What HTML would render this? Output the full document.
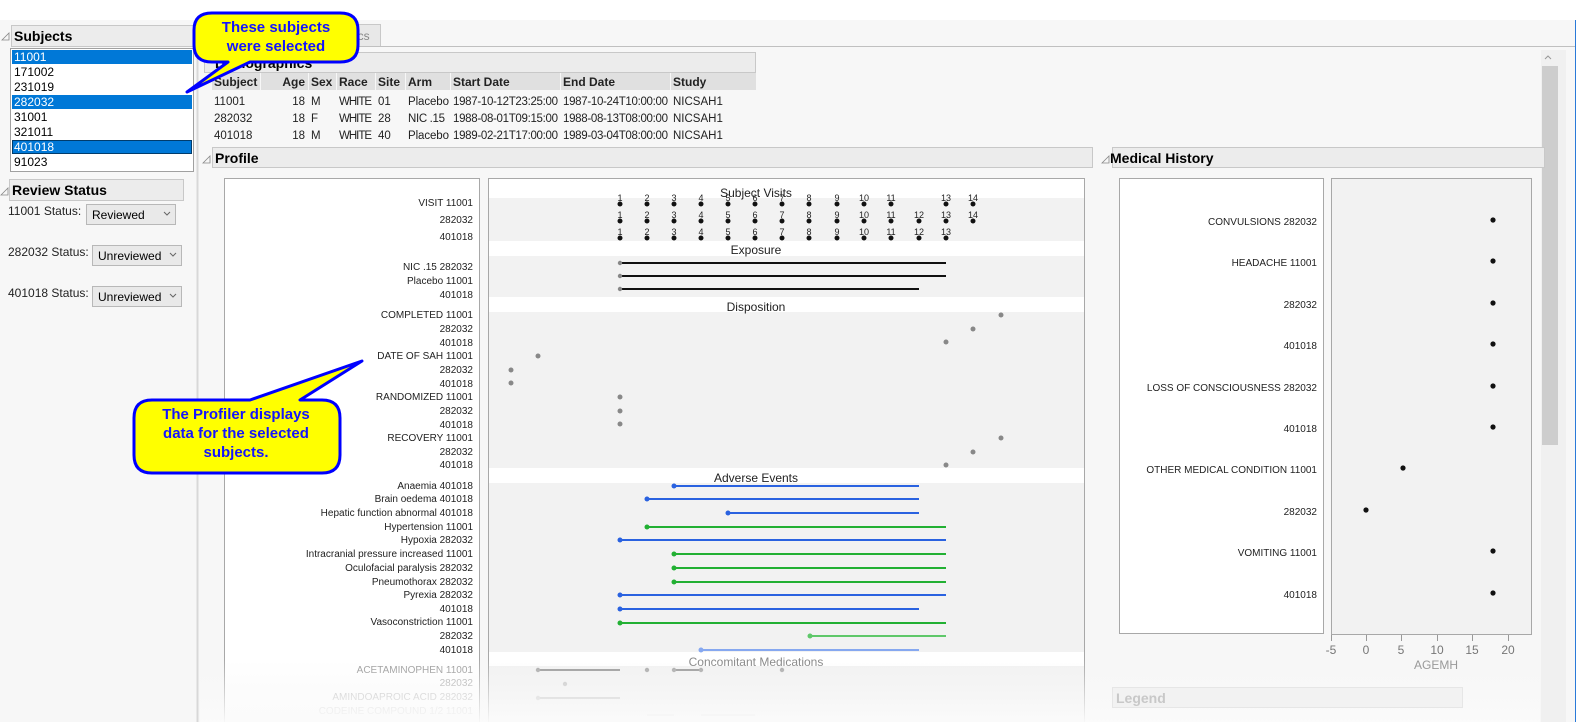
<!DOCTYPE html>
<html><head><meta charset="utf-8"><style>
html,body{margin:0;padding:0;background:#fff;overflow:hidden;width:1576px;height:722px}
svg{display:block;font-family:"Liberation Sans",sans-serif}
</style></head><body>
<svg width="1576" height="722" viewBox="0 0 1576 722" xmlns="http://www.w3.org/2000/svg">
<defs>
<linearGradient id="fade" x1="0" y1="0" x2="0" y2="1">
<stop offset="0" stop-color="#f7f7f7" stop-opacity="0"/><stop offset="1" stop-color="#fbfbfb" stop-opacity="0.95"/>
</linearGradient>
</defs>
<rect x="0" y="20" width="1576" height="702" fill="#f7f7f7"/>
<!-- left panel -->
<line x1="197.5" y1="20" x2="197.5" y2="722" stroke="#d8d8d8" stroke-width="2"/>
<path d="M2 40 L9 33 L9 40 Z" fill="none" stroke="#888" stroke-width="0.8"/>
<rect x="11.5" y="25.5" width="182" height="21" fill="#ececec" stroke="#c8c8c8"/>
<text x="14" y="41" font-size="14" font-weight="bold">Subjects</text>
<rect x="10.5" y="48.5" width="183" height="123" fill="#fff" stroke="#a0a0a0"/>
<rect x="12" y="50" width="180" height="14" fill="#0078d7"/>
<rect x="12" y="95" width="180" height="14" fill="#0078d7"/>
<rect x="12" y="140" width="180" height="14" fill="#0078d7"/>
<rect x="12.5" y="140.5" width="179" height="13" fill="none" stroke="#000" stroke-dasharray="1,1"/>
<g font-size="12">
<text x="14" y="61" fill="#fff">11001</text>
<text x="14" y="76">171002</text>
<text x="14" y="91">231019</text>
<text x="14" y="106" fill="#fff">282032</text>
<text x="14" y="121">31001</text>
<text x="14" y="136">321011</text>
<text x="14" y="151" fill="#fff">401018</text>
<text x="14" y="166">91023</text>
</g>
<path d="M1 195 L8 188 L8 195 Z" fill="none" stroke="#888" stroke-width="0.8"/>
<rect x="9.5" y="179.5" width="174" height="21" fill="#ececec" stroke="#c8c8c8"/>
<text x="12" y="195" font-size="14" font-weight="bold">Review Status</text>
<g font-size="12" fill="#222">
<text x="8" y="215">11001 Status:</text>
<text x="8" y="256">282032 Status:</text>
<text x="8" y="297">401018 Status:</text>
</g>
<rect x="86.5" y="204.5" width="89" height="20" fill="#e9e9e9" stroke="#b8b8b8"/>
<text x="92" y="219" font-size="12">Reviewed</text>
<path d="M164 212 l3 3 l3 -3" fill="none" stroke="#666"/>
<rect x="92.5" y="245.5" width="89" height="20" fill="#e9e9e9" stroke="#b8b8b8"/>
<text x="98" y="260" font-size="12">Unreviewed</text>
<path d="M170 253 l3 3 l3 -3" fill="none" stroke="#666"/>
<rect x="92.5" y="286.5" width="89" height="20" fill="#e9e9e9" stroke="#b8b8b8"/>
<text x="98" y="301" font-size="12">Unreviewed</text>
<path d="M170 294 l3 3 l3 -3" fill="none" stroke="#666"/>

<!-- tab -->
<rect x="330.5" y="24.5" width="50" height="22" fill="#e8e8e8" stroke="#c8c8c8"/>
<text x="355" y="40" font-size="12" fill="#888">ics</text>
<line x1="200" y1="46.5" x2="1576" y2="46.5" stroke="#c0c0c0"/>
<line x1="1575.5" y1="20" x2="1575.5" y2="722" stroke="#2a7ad8"/>
<!-- scrollbar -->
<rect x="1541" y="50" width="25" height="672" fill="#f0f0f0"/>
<rect x="1542" y="66" width="16" height="379" fill="#cdcdcd"/>
<path d="M1545 59 l3 -3 l3 3" fill="none" stroke="#999"/>

<!-- demographics -->
<rect x="204.5" y="52.5" width="551" height="20" fill="#ececec" stroke="#c8c8c8"/>
<text x="215" y="68" font-size="14" font-weight="bold">Demographics</text>
<g fill="#e0e0e0">
<rect x="212" y="73" width="48" height="17"/><rect x="261" y="73" width="47" height="17"/><rect x="309" y="73" width="27" height="17"/><rect x="337" y="73" width="38" height="17"/><rect x="376" y="73" width="29" height="17"/><rect x="406" y="73" width="44" height="17"/><rect x="451" y="73" width="109" height="17"/><rect x="561" y="73" width="109" height="17"/><rect x="671" y="73" width="85" height="17"/>
</g>
<g font-size="12" font-weight="bold" fill="#222">
<text x="214" y="86">Subject</text><text x="305" y="86" text-anchor="end">Age</text><text x="311" y="86">Sex</text><text x="339" y="86">Race</text><text x="378" y="86">Site</text><text x="408" y="86">Arm</text><text x="453" y="86">Start Date</text><text x="563" y="86">End Date</text><text x="673" y="86">Study</text>
</g>
<g font-size="11.5" fill="#222">
<text x="214" y="105">11001</text><text x="305" y="105" text-anchor="end">18</text><text x="311" y="105">M</text><text x="339" y="105" textLength="33">WHITE</text><text x="378" y="105">01</text><text x="408" y="105" textLength="41">Placebo</text><text x="453" y="105" textLength="105">1987-10-12T23:25:00</text><text x="563" y="105" textLength="105">1987-10-24T10:00:00</text><text x="673" y="105">NICSAH1</text>
<text x="214" y="122">282032</text><text x="305" y="122" text-anchor="end">18</text><text x="311" y="122">F</text><text x="339" y="122" textLength="33">WHITE</text><text x="378" y="122">28</text><text x="408" y="122" textLength="37">NIC .15</text><text x="453" y="122" textLength="105">1988-08-01T09:15:00</text><text x="563" y="122" textLength="105">1988-08-13T08:00:00</text><text x="673" y="122">NICSAH1</text>
<text x="214" y="139">401018</text><text x="305" y="139" text-anchor="end">18</text><text x="311" y="139">M</text><text x="339" y="139" textLength="33">WHITE</text><text x="378" y="139">40</text><text x="408" y="139" textLength="41">Placebo</text><text x="453" y="139" textLength="105">1989-02-21T17:00:00</text><text x="563" y="139" textLength="105">1989-03-04T08:00:00</text><text x="673" y="139">NICSAH1</text>
</g>

<!-- profile -->
<path d="M203 163 L210 156 L210 163 Z" fill="none" stroke="#888" stroke-width="0.8"/>
<rect x="212.5" y="147.5" width="880" height="20" fill="#ececec" stroke="#c8c8c8"/>
<text x="215" y="163" font-size="14" font-weight="bold">Profile</text>
<rect x="224.5" y="178.5" width="255" height="560" fill="#fff" stroke="#a8a8a8"/>
<rect x="488.5" y="178.5" width="596" height="560" fill="#fff" stroke="#a8a8a8"/>
<g fill="#f2f2f2">
<rect x="489" y="198" width="595" height="43"/>
<rect x="489" y="256" width="595" height="41"/>
<rect x="489" y="312" width="595" height="156"/>
<rect x="489" y="483" width="595" height="169"/>
<rect x="489" y="666" width="595" height="56"/>
</g>
<g font-size="12" text-anchor="middle" fill="#222">
<text x="756" y="197">Subject Visits</text>
<text x="756" y="254">Exposure</text>
<text x="756" y="311">Disposition</text>
<text x="756" y="482">Adverse Events</text>
<text x="756" y="666" fill="#888">Concomitant Medications</text>
</g>
<g font-size="10" text-anchor="end" fill="#222">
<text x="473" y="206">VISIT 11001</text><text x="473" y="223">282032</text><text x="473" y="240">401018</text>
<text x="473" y="270">NIC .15 282032</text><text x="473" y="284">Placebo 11001</text><text x="473" y="298">401018</text>
<text x="473" y="318">COMPLETED 11001</text><text x="473" y="332">282032</text><text x="473" y="346">401018</text><text x="473" y="359">DATE OF SAH 11001</text><text x="473" y="373">282032</text><text x="473" y="387">401018</text><text x="473" y="400">RANDOMIZED 11001</text><text x="473" y="414">282032</text><text x="473" y="428">401018</text><text x="473" y="441">RECOVERY 11001</text><text x="473" y="455">282032</text><text x="473" y="468">401018</text>
<text x="473" y="489">Anaemia 401018</text><text x="473" y="502">Brain oedema 401018</text><text x="473" y="516">Hepatic function abnormal 401018</text><text x="473" y="530">Hypertension 11001</text><text x="473" y="543">Hypoxia 282032</text><text x="473" y="557">Intracranial pressure increased 11001</text><text x="473" y="571">Oculofacial paralysis 282032</text><text x="473" y="585">Pneumothorax 282032</text><text x="473" y="598">Pyrexia 282032</text><text x="473" y="612">401018</text><text x="473" y="625">Vasoconstriction 11001</text><text x="473" y="639">282032</text><text x="473" y="653">401018</text>
<text x="473" y="673" fill="#999">ACETAMINOPHEN 11001</text><text x="473" y="686" fill="#aaa">282032</text><text x="473" y="700" fill="#bbb">AMINDOAPROIC ACID 282032</text><text x="473" y="714" fill="#ccc">CODEINE COMPOUND 1/2 11001</text>
</g>
<!-- visits -->
<g font-size="9" text-anchor="middle" fill="#222">
<text x="620" y="201">1</text><text x="647" y="201">2</text><text x="674" y="201">3</text><text x="701" y="201">4</text><text x="728" y="201">5</text><text x="755" y="201">6</text><text x="782" y="201">7</text><text x="809" y="201">8</text><text x="837" y="201">9</text><text x="864" y="201">10</text><text x="891" y="201">11</text><text x="946" y="201">13</text><text x="973" y="201">14</text>
<text x="620" y="218">1</text><text x="647" y="218">2</text><text x="674" y="218">3</text><text x="701" y="218">4</text><text x="728" y="218">5</text><text x="755" y="218">6</text><text x="782" y="218">7</text><text x="809" y="218">8</text><text x="837" y="218">9</text><text x="864" y="218">10</text><text x="891" y="218">11</text><text x="919" y="218">12</text><text x="946" y="218">13</text><text x="973" y="218">14</text>
<text x="620" y="235">1</text><text x="647" y="235">2</text><text x="674" y="235">3</text><text x="701" y="235">4</text><text x="728" y="235">5</text><text x="755" y="235">6</text><text x="782" y="235">7</text><text x="809" y="235">8</text><text x="837" y="235">9</text><text x="864" y="235">10</text><text x="891" y="235">11</text><text x="919" y="235">12</text><text x="946" y="235">13</text>
</g>
<g fill="#111">
<circle cx="620" cy="204" r="2.5"/><circle cx="647" cy="204" r="2.5"/><circle cx="674" cy="204" r="2.5"/><circle cx="701" cy="204" r="2.5"/><circle cx="728" cy="204" r="2.5"/><circle cx="755" cy="204" r="2.5"/><circle cx="782" cy="204" r="2.5"/><circle cx="809" cy="204" r="2.5"/><circle cx="837" cy="204" r="2.5"/><circle cx="864" cy="204" r="2.5"/><circle cx="891" cy="204" r="2.5"/><circle cx="946" cy="204" r="2.5"/><circle cx="973" cy="204" r="2.5"/>
<circle cx="620" cy="221" r="2.5"/><circle cx="647" cy="221" r="2.5"/><circle cx="674" cy="221" r="2.5"/><circle cx="701" cy="221" r="2.5"/><circle cx="728" cy="221" r="2.5"/><circle cx="755" cy="221" r="2.5"/><circle cx="782" cy="221" r="2.5"/><circle cx="809" cy="221" r="2.5"/><circle cx="837" cy="221" r="2.5"/><circle cx="864" cy="221" r="2.5"/><circle cx="891" cy="221" r="2.5"/><circle cx="919" cy="221" r="2.5"/><circle cx="946" cy="221" r="2.5"/><circle cx="973" cy="221" r="2.5"/>
<circle cx="620" cy="238" r="2.5"/><circle cx="647" cy="238" r="2.5"/><circle cx="674" cy="238" r="2.5"/><circle cx="701" cy="238" r="2.5"/><circle cx="728" cy="238" r="2.5"/><circle cx="755" cy="238" r="2.5"/><circle cx="782" cy="238" r="2.5"/><circle cx="809" cy="238" r="2.5"/><circle cx="837" cy="238" r="2.5"/><circle cx="864" cy="238" r="2.5"/><circle cx="891" cy="238" r="2.5"/><circle cx="919" cy="238" r="2.5"/><circle cx="946" cy="238" r="2.5"/>
</g>
<!-- exposure -->
<g stroke="#111" stroke-width="2">
<line x1="620" y1="263" x2="946" y2="263"/><line x1="620" y1="276" x2="946" y2="276"/><line x1="620" y1="289" x2="919" y2="289"/>
</g>
<g fill="#888"><circle cx="620" cy="263" r="2.2"/><circle cx="620" cy="276" r="2.2"/><circle cx="620" cy="289" r="2.2"/>
<circle cx="1001" cy="315" r="2.5"/><circle cx="973" cy="329" r="2.5"/><circle cx="946" cy="342" r="2.5"/><circle cx="538" cy="356" r="2.5"/><circle cx="511" cy="370" r="2.5"/><circle cx="511" cy="383" r="2.5"/><circle cx="620" cy="397" r="2.5"/><circle cx="620" cy="411" r="2.5"/><circle cx="620" cy="424" r="2.5"/><circle cx="1001" cy="438" r="2.5"/><circle cx="973" cy="452" r="2.5"/><circle cx="946" cy="465" r="2.5"/>
</g>
<!-- AE -->
<g stroke-width="2">
<g stroke="#2a62e0"><line x1="674" y1="486" x2="919" y2="486"/><line x1="647" y1="499" x2="919" y2="499"/><line x1="728" y1="513" x2="919" y2="513"/><line x1="620" y1="540" x2="946" y2="540"/><line x1="620" y1="595" x2="946" y2="595"/><line x1="620" y1="609" x2="919" y2="609"/></g>
<g stroke="#22b033"><line x1="647" y1="527" x2="946" y2="527"/><line x1="674" y1="554" x2="946" y2="554"/><line x1="674" y1="568" x2="946" y2="568"/><line x1="674" y1="582" x2="946" y2="582"/><line x1="620" y1="623" x2="946" y2="623"/></g>
<line x1="810" y1="636" x2="946" y2="636" stroke="#5fc86a"/><line x1="701" y1="650" x2="919" y2="650" stroke="#86a8f0"/>
</g>
<g fill="#2a62e0"><circle cx="674" cy="486" r="2.5"/><circle cx="647" cy="499" r="2.5"/><circle cx="728" cy="513" r="2.5"/><circle cx="620" cy="540" r="2.5"/><circle cx="620" cy="595" r="2.5"/><circle cx="620" cy="609" r="2.5"/></g>
<g fill="#22b033"><circle cx="647" cy="527" r="2.5"/><circle cx="674" cy="554" r="2.5"/><circle cx="674" cy="568" r="2.5"/><circle cx="674" cy="582" r="2.5"/><circle cx="620" cy="623" r="2.5"/></g>
<circle cx="810" cy="636" r="2.5" fill="#5fc86a"/><circle cx="701" cy="650" r="2.5" fill="#86a8f0"/>
<!-- CM -->
<g stroke-width="2"><line x1="538" y1="670" x2="620" y2="670" stroke="#999"/><line x1="674" y1="670" x2="701" y2="670" stroke="#999"/><line x1="538" y1="698" x2="620" y2="698" stroke="#c4c4c4"/><line x1="647" y1="715" x2="674" y2="715" stroke="#ddd"/><line x1="701" y1="715" x2="755" y2="715" stroke="#ddd"/></g>
<g fill="#aaa"><circle cx="538" cy="670" r="2.2"/><circle cx="647" cy="670" r="2.2"/><circle cx="674" cy="670" r="2.2"/><circle cx="701" cy="670" r="2.2"/><circle cx="782" cy="670" r="2.2"/><circle cx="565" cy="684" r="2.2" fill="#c4c4c4"/><circle cx="538" cy="698" r="2.2" fill="#ccc"/></g>
<rect x="200" y="660" width="1340" height="62" fill="url(#fade)"/>

<!-- medical history -->
<path d="M1102 163 L1109 156 L1109 163 Z" fill="none" stroke="#888" stroke-width="0.8"/>
<rect x="1112.5" y="147.5" width="432" height="20" fill="#ececec" stroke="#c8c8c8"/>
<text x="1110" y="163" font-size="14" font-weight="bold">Medical History</text>
<rect x="1119.5" y="178.5" width="204" height="455" fill="#fff" stroke="#a8a8a8"/>
<rect x="1331.5" y="178.5" width="200" height="456" fill="#f2f2f2" stroke="#a8a8a8"/>
<g font-size="10" text-anchor="end" fill="#222">
<text x="1317" y="225">CONVULSIONS 282032</text><text x="1317" y="266">HEADACHE 11001</text><text x="1317" y="308">282032</text><text x="1317" y="349">401018</text><text x="1317" y="391">LOSS OF CONSCIOUSNESS 282032</text><text x="1317" y="432">401018</text><text x="1317" y="473">OTHER MEDICAL CONDITION 11001</text><text x="1317" y="515">282032</text><text x="1317" y="556">VOMITING 11001</text><text x="1317" y="598">401018</text>
</g>
<g fill="#111"><circle cx="1493" cy="220" r="2.6"/><circle cx="1493" cy="261" r="2.6"/><circle cx="1493" cy="303" r="2.6"/><circle cx="1493" cy="344" r="2.6"/><circle cx="1493" cy="386" r="2.6"/><circle cx="1493" cy="427" r="2.6"/><circle cx="1403" cy="468" r="2.6"/><circle cx="1366" cy="510" r="2.6"/><circle cx="1493" cy="551" r="2.6"/><circle cx="1493" cy="593" r="2.6"/></g>
<g stroke="#999"><line x1="1331.5" y1="635" x2="1331.5" y2="641"/><line x1="1366.5" y1="635" x2="1366.5" y2="641"/><line x1="1401.5" y1="635" x2="1401.5" y2="641"/><line x1="1437.5" y1="635" x2="1437.5" y2="641"/><line x1="1472.5" y1="635" x2="1472.5" y2="641"/><line x1="1508.5" y1="635" x2="1508.5" y2="641"/></g>
<g font-size="12" text-anchor="middle" fill="#777">
<text x="1331" y="654">-5</text><text x="1366" y="654">0</text><text x="1401" y="654">5</text><text x="1437" y="654">10</text><text x="1472" y="654">15</text><text x="1508" y="654">20</text>
<text x="1436" y="669" fill="#999">AGEMH</text>
</g>
<rect x="1112.5" y="687.5" width="350" height="20" fill="#f2f2f2" stroke="#e6e6e6"/>
<text x="1116" y="703" font-size="14" font-weight="bold" fill="#c8c8c8">Legend</text>

<!-- callouts -->
<path d="M212 13 H340 Q358 13 358 30 V45 Q358 62 340 62 H250 L187 92 L228 62 H212 Q194 62 194 45 V30 Q194 13 212 13 Z" fill="#ffff00" stroke="#0000ff" stroke-width="3" stroke-linejoin="round"/>
<g font-size="15" font-weight="bold" fill="#1414ff" text-anchor="middle">
<text x="276" y="32">These subjects</text><text x="276" y="51">were selected</text>
</g>
<path d="M152 400 H250 L362 361 L300 400 H322 Q340 400 340 418 V455 Q340 473 322 473 H152 Q134 473 134 455 V418 Q134 400 152 400 Z" fill="#ffff00" stroke="#0000ff" stroke-width="3" stroke-linejoin="round"/>
<g font-size="15" font-weight="bold" fill="#1414ff" text-anchor="middle">
<text x="236" y="419">The Profiler displays</text><text x="236" y="438">data for the selected</text><text x="236" y="457">subjects.</text>
</g>
</svg>
</body></html>
